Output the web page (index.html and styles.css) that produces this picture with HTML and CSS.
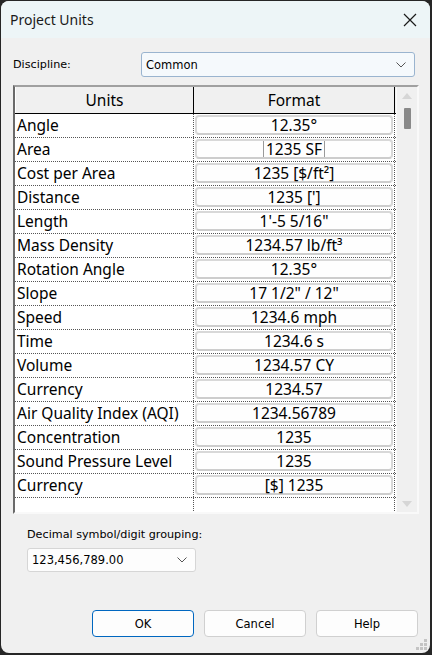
FILE: index.html
```html
<!DOCTYPE html>
<html>
<head>
<meta charset="utf-8">
<link rel="stylesheet" href="styles.css">
</head>
<body>
<div class="window">
  <div class="titlebar">
    <span class="title">Project Units</span>
    <svg class="close" width="14" height="14" viewBox="0 0 14 14"><path d="M1 1 L13 13 M13 1 L1 13" stroke="#1a1a1a" stroke-width="1.2" fill="none"/></svg>
  </div>
  <div class="content">
    <div class="discipline">
      <span class="label">Discipline:</span>
      <div class="combo blue">
        <span>Common</span>
        <svg width="10" height="6" viewBox="0 0 10 6"><path d="M0.5 0.5 L5 5 L9.5 0.5" stroke="#555" stroke-width="1" fill="none"/></svg>
      </div>
    </div>
    <div class="table">
      <div class="tbody">
        <div class="thead">
          <div class="th units">Units</div>
          <div class="th fmt">Format</div>
        </div>
        <div class="row"><div class="name">Angle</div><div class="cell"><div class="btn">12.35°</div></div></div>
        <div class="row"><div class="name">Area</div><div class="cell"><div class="btn"><span class="sel">1235 SF</span></div></div></div>
        <div class="row"><div class="name">Cost per Area</div><div class="cell"><div class="btn">1235 [$/ft²]</div></div></div>
        <div class="row"><div class="name">Distance</div><div class="cell"><div class="btn">1235 [']</div></div></div>
        <div class="row"><div class="name">Length</div><div class="cell"><div class="btn">1'-5 5/16"</div></div></div>
        <div class="row"><div class="name">Mass Density</div><div class="cell"><div class="btn">1234.57 lb/ft³</div></div></div>
        <div class="row"><div class="name">Rotation Angle</div><div class="cell"><div class="btn">12.35°</div></div></div>
        <div class="row"><div class="name">Slope</div><div class="cell"><div class="btn">17 1/2" / 12"</div></div></div>
        <div class="row"><div class="name">Speed</div><div class="cell"><div class="btn">1234.6 mph</div></div></div>
        <div class="row"><div class="name">Time</div><div class="cell"><div class="btn">1234.6 s</div></div></div>
        <div class="row"><div class="name">Volume</div><div class="cell"><div class="btn">1234.57 CY</div></div></div>
        <div class="row"><div class="name">Currency</div><div class="cell"><div class="btn">1234.57</div></div></div>
        <div class="row"><div class="name">Air Quality Index (AQI)</div><div class="cell"><div class="btn">1234.56789</div></div></div>
        <div class="row"><div class="name">Concentration</div><div class="cell"><div class="btn">1235</div></div></div>
        <div class="row"><div class="name">Sound Pressure Level</div><div class="cell"><div class="btn">1235</div></div></div>
        <div class="row"><div class="name">Currency</div><div class="cell"><div class="btn">[$] 1235</div></div></div>
        <div class="row empty"><div class="name"></div><div class="cell"></div></div>
      </div>
      <div class="scrollbar">
        <svg class="arrow" width="10" height="6" viewBox="0 0 10 6"><path d="M5 0 L10 6 L0 6 Z" fill="#d6d6d6"/></svg>
        <div class="thumb"></div>
        <div class="spacer"></div>
        <svg class="arrow" width="10" height="6" viewBox="0 0 10 6"><path d="M0 0 L10 0 L5 6 Z" fill="#d6d6d6"/></svg>
      </div>
    </div>
    <div class="decimal">
      <span class="label">Decimal symbol/digit grouping:</span>
      <div class="combo white">
        <span>123,456,789.00</span>
        <svg width="10" height="6" viewBox="0 0 10 6"><path d="M0.5 0.5 L5 5 L9.5 0.5" stroke="#555" stroke-width="1" fill="none"/></svg>
      </div>
    </div>
    <div class="buttons">
      <div class="pbtn default">OK</div>
      <div class="pbtn">Cancel</div>
      <div class="pbtn">Help</div>
    </div>
  </div>
  <svg class="grip" width="12" height="12" viewBox="0 0 12 12">
    <rect x="8" y="0" width="3" height="3" fill="#c4c4c4"/>
    <rect x="4" y="4" width="3" height="3" fill="#c4c4c4"/>
    <rect x="8" y="4" width="3" height="3" fill="#c4c4c4"/>
    <rect x="0" y="8" width="3" height="3" fill="#c4c4c4"/>
    <rect x="4" y="8" width="3" height="3" fill="#c4c4c4"/>
    <rect x="8" y="8" width="3" height="3" fill="#c4c4c4"/>
  </svg>
</div>
</body>
</html>
```
FILE: styles.css
```css
* { box-sizing: border-box; }
html, body { margin: 0; padding: 0; }
body {
  background: #262626;
  width: 432px;
  height: 655px;
  overflow: hidden;
  font-family: "Noto Sans", "Open Sans", sans-serif;
  color: #000;
}
.window {
  position: relative;
  margin: 1px 0 0 1px;
  width: 429px;
  height: 652px;
  border-radius: 8px;
  background: #f0f0f0;
  overflow: hidden;
  display: flex;
  flex-direction: column;
}
.titlebar {
  height: 37px;
  background: #edf5f7;
  display: flex;
  align-items: center;
  justify-content: space-between;
  padding: 0 13px 0 9px;
  flex-shrink: 0;
}
.title { font-size: 14px; color: #1a1a1a; }
.content {
  display: flex;
  flex-direction: column;
  padding: 14px 0 0 12px;
}
.label {
  font-family: "DejaVu Sans", sans-serif;
  font-size: 11.2px;
  color: #000;
}
.discipline {
  display: flex;
  align-items: center;
  height: 25px;
}
.discipline .label { width: 128px; }
.combo {
  display: flex;
  align-items: center;
  justify-content: space-between;
  font-family: "DejaVu Sans", sans-serif;
  font-size: 11.5px;
  border-radius: 3px;
}
.combo.blue {
  width: 274px;
  height: 25px;
  background: #f5f9fc;
  border: 1px solid #9ab4cf;
  padding: 0 8px 0 4px;
}
.combo.white {
  width: 169px;
  height: 24px;
  background: #fdfdfd;
  border: 1px solid #d6d6d6;
  padding: 0 8px 0 4px;
}
.table {
  margin-top: 8px;
  width: 406px;
  height: 429px;
  border-style: solid;
  border-width: 2px;
  border-color: #a0a0a0 #f9f9f9 #f9f9f9 #6a6a6a;
  background: #fff;
  display: flex;
}
.tbody {
  width: 381px;
  display: flex;
  flex-direction: column;
  font-size: 15.5px;
}
.thead {
  display: flex;
  height: 27px;
  background: #f0f0f0;
  border-bottom: 1px solid #000;
}
.th {
  display: flex;
  align-items: center;
  justify-content: center;
  border-right: 1px solid #000;
}
.th.units { width: 179px; border-left: 1px solid #fff; }
.th.fmt { width: 201px; }
.row {
  display: flex;
  height: 24px;
  border-bottom: 1px dotted #555;
}
.row.empty { height: 13px; border-bottom: none; }
.name {
  width: 179px;
  padding-left: 2px;
  border-right: 1px dotted #555;
  line-height: 22px;
  white-space: nowrap;
}
.cell {
  width: 201px;
  border-right: 1px dotted #555;
  padding: 1px 0 2px 1px;
}
.btn {
  height: 20px;
  width: 198px;
  border: 2px solid #d8d8d8;
  border-bottom-color: #cdcdcd;
  border-radius: 4px;
  background: #fefefe;
  display: flex;
  align-items: center;
  justify-content: center;
  line-height: 16px;
}
.sel {
  border-left: 1px solid #9a9a9a;
  border-right: 1px solid #9a9a9a;
  padding: 0 2px;
}
.scrollbar {
  width: 21px;
  background: #f0f0f0;
  border-left: 1px solid #fafafa;
  display: flex;
  flex-direction: column;
  align-items: center;
  padding: 6px 0 5px 0;
}
.thumb {
  margin-top: 9px;
  width: 7px;
  height: 21px;
  background: #898989;
  border-radius: 1px;
}
.spacer { flex: 1; }
.decimal {
  margin-top: 14px;
  padding-left: 14px;
  display: flex;
  flex-direction: column;
  gap: 7px;
}
.buttons {
  margin-top: 38px;
  padding-left: 79px;
  display: flex;
  gap: 10px;
}
.pbtn {
  width: 102px;
  height: 27px;
  background: #fdfdfd;
  border: 1px solid #d0d0d0;
  border-radius: 4px;
  display: flex;
  align-items: center;
  justify-content: center;
  font-family: "DejaVu Sans", sans-serif;
  font-size: 11.5px;
}
.pbtn.default { border-color: #0067c0; }
.grip {
  position: absolute;
  right: 2px;
  bottom: 2px;
}
```
